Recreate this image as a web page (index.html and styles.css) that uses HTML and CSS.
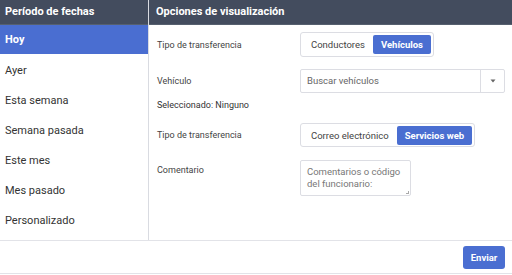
FILE: index.html
```html
<!DOCTYPE html>
<html lang="es">
<head>
<meta charset="utf-8">
<link rel="stylesheet" href="styles.css">
</head>
<body>
<div class="app">
  <div class="main">
    <div class="left">
      <div class="head">Período de fechas</div>
      <ul class="list">
        <li class="item active">Hoy</li>
        <li class="item">Ayer</li>
        <li class="item">Esta semana</li>
        <li class="item">Semana pasada</li>
        <li class="item">Este mes</li>
        <li class="item">Mes pasado</li>
        <li class="item">Personalizado</li>
      </ul>
    </div>
    <div class="right">
      <div class="head head-right">Opciones de visualización</div>
      <div class="form">
        <div class="row row1">
          <div class="label">Tipo de transferencia</div>
          <div class="seg seg1">
            <span class="opt">Conductores</span>
            <span class="opt on">Vehículos</span>
          </div>
        </div>
        <div class="row row2">
          <div class="label">Vehículo</div>
          <div class="select">
            <span class="ph">Buscar vehículos</span>
            <span class="caret"><svg width="6" height="4" viewBox="0 0 6 4"><path d="M0.5 0.5h5L3 3.5z" fill="#666"/></svg></span>
          </div>
        </div>
        <div class="selected">Seleccionado: Ninguno</div>
        <div class="row row4">
          <div class="label">Tipo de transferencia</div>
          <div class="seg seg2">
            <span class="opt">Correo electrónico</span>
            <span class="opt on">Servicios web</span>
          </div>
        </div>
        <div class="row row5">
          <div class="label label-top">Comentario</div>
          <div class="textarea">Comentarios o código del funcionario:<span class="grip"></span></div>
        </div>
      </div>
    </div>
  </div>
  <div class="footer">
    <button class="send">Enviar</button>
  </div>
</div>
</body>
</html>
```
FILE: styles.css
```css
* { box-sizing: border-box; }
html, body { margin: 0; padding: 0; }
body {
  font-family: Roboto, "Liberation Sans", Arial, sans-serif;
  background: #fff;
  color: #333;
  width: 512px;
  height: 275px;
  overflow: hidden;
}
.app { display: flex; flex-direction: column; height: 275px; }
.main { display: flex; height: 241px; border-bottom: 1px solid #e2e3e8; }
.left { width: 149px; border-right: 1px solid #d9dbe1; }
.right { flex: 1; }
.head {
  height: 25px;
  background: #434c5e;
  border-bottom: 1px solid #56606f;
  color: #fff;
  font-weight: 700;
  font-size: 11px;
  line-height: 24px;
  padding-left: 5px;
}
.head-right { padding-left: 7px; }
.list { list-style: none; margin: 0; padding: 0; }
.item {
  height: 30px;
  line-height: 34px;
  font-size: 11px;
  padding-left: 5px;
  color: #333;
}
.item.active {
  background: #4a6ed1;
  color: #fff;
  font-weight: 700;
  height: 29px;
  line-height: 30px;
}
.form { padding-left: 8px; padding-right: 7px; }
.row { display: flex; align-items: center; }
.label { width: 143px; flex: none; font-size: 9px; color: #444; }
.row1 { margin-top: 7px; }
.row2 { margin-top: 12px; }
.row4 { margin-top: 12px; }
.row5 { margin-top: 13px; align-items: flex-start; }
.label-top { padding-top: 5px; }
.seg {
  display: flex;
  align-items: center;
  border: 1px solid #dcdde3;
  border-radius: 3px;
  padding: 2px;
  background: #fff;
  white-space: nowrap;
}
.seg1 { height: 25px; width: 134px; }
.seg2 { height: 24px; width: 175px; }
.opt {
  font-size: 9.5px;
  color: #444;
  padding: 0 8px;
  height: 19px;
  line-height: 19px;
  white-space: nowrap;
}
.opt.on {
  background: #4a6ed1;
  color: #fff;
  font-weight: 700;
  border-radius: 2px;
  margin-left: auto;
}
.select {
  flex: 1;
  height: 24px;
  display: flex;
  border: 1px solid #dcdde3;
  border-radius: 2px;
}
.ph { flex: 1; font-size: 9.5px; color: #666; line-height: 22px; padding-left: 6px; }
.caret {
  width: 24px;
  border-left: 1px solid #dcdde3;
  display: flex;
  align-items: center;
  justify-content: center;
}
.selected { font-size: 9px; color: #333; margin-top: 6px; line-height: 12px; }
.textarea {
  position: relative;
  width: 111px;
  height: 36px;
  border: 1px solid #dcdde3;
  border-radius: 2px;
  font-size: 9.5px;
  line-height: 12px;
  color: #777;
  padding: 5px 6px;
}
.grip {
  position: absolute;
  right: 1px;
  bottom: 1px;
  width: 3px;
  height: 3px;
  border-right: 1px solid #aaa;
  border-bottom: 1px solid #aaa;
}
.footer {
  height: 33px;
  border-bottom: 1px solid #e2e3e8;
  display: flex;
  justify-content: flex-end;
  align-items: center;
  padding-right: 7px;
}
.send {
  width: 42px;
  height: 23px;
  border: none;
  border-radius: 3px;
  background: #4a6ed1;
  color: #fff;
  font-family: Roboto, "Liberation Sans", Arial, sans-serif;
  font-weight: 700;
  font-size: 9.5px;
  padding: 0;
}
```
